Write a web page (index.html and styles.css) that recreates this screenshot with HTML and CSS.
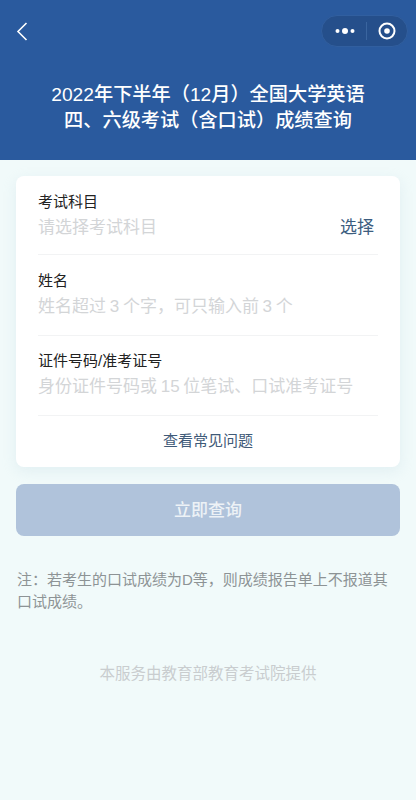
FILE: index.html
```html
<!DOCTYPE html>
<html lang="zh-CN">
<head>
  <meta charset="UTF-8" />
  <meta name="viewport" content="width=device-width, initial-scale=1.0" />
  <title>成绩查询</title>
  <link rel="stylesheet" href="styles.css">
</head>
<body>
  <header class="page-header">
    <div class="nav-bar">
      <svg class="back-icon" width="12" height="20" viewBox="0 0 12 20">
        <path d="M10.5 2 L2 10.5 L10.5 19" fill="none" stroke="#fff" stroke-width="1.6" />
      </svg>
      <div class="capsule">
        <svg width="20" height="8" viewBox="0 0 20 8">
          <circle cx="2.5" cy="4" r="2" fill="#fff" />
          <circle cx="10" cy="4" r="3" fill="#fff" />
          <circle cx="17.5" cy="4" r="2" fill="#fff" />
        </svg>
        <span class="capsule-line"></span>
        <svg width="18" height="18" viewBox="0 0 18 18">
          <circle cx="9" cy="9" r="7.5" fill="none" stroke="#fff" stroke-width="2" />
          <circle cx="9" cy="9" r="2.8" fill="#fff" />
        </svg>
      </div>
    </div>
    <h1 class="page-title">2022年下半年（12月）全国大学英语<br>四、六级考试（含口试）成绩查询</h1>
  </header>
  <main>
    <div class="card">
      <div class="field">
        <div class="field-label">考试科目</div>
        <div class="field-row">
          <span class="placeholder">请选择考试科目</span>
          <span class="pick">选择</span>
        </div>
      </div>
      <div class="field">
        <div class="field-label">姓名</div>
        <div class="field-row">
          <span class="placeholder">姓名超过 3 个字，可只输入前 3 个</span>
        </div>
      </div>
      <div class="field">
        <div class="field-label">证件号码/准考证号</div>
        <div class="field-row">
          <span class="placeholder">身份证件号码或 15 位笔试、口试准考证号</span>
        </div>
      </div>
      <div class="faq">查看常见问题</div>
    </div>
    <button class="submit">立即查询</button>
    <p class="note">注：若考生的口试成绩为D等，则成绩报告单上不报道其口试成绩。</p>
    <p class="provider">本服务由教育部教育考试院提供</p>
  </main>
</body>
</html>
```
FILE: styles.css
```css
html, body {
  margin: 0;
  padding: 0;
  height: 100%;
  background-color: #f1fafa;
  font-family: "Liberation Sans", "Noto Sans CJK SC", sans-serif;
}

.page-header {
  height: 160px;
  box-sizing: border-box;
  padding-top: 15px;
  background-color: #2a5a9e;
  color: #fff;
}

.nav-bar {
  display: flex;
  align-items: center;
  justify-content: space-between;
  padding: 0 8px 0 16px;
}

.capsule {
  width: 87px;
  height: 32px;
  box-sizing: border-box;
  display: flex;
  align-items: center;
  justify-content: space-between;
  padding: 0 11px 0 13px;
  background-color: #254f8b;
  border: 1px solid #315f9f;
  border-radius: 16px;
}

.capsule-line {
  width: 1px;
  height: 18px;
  background-color: #3a659f;
}

.page-title {
  margin: 35px 0 0;
  font-size: 19.2px;
  font-weight: 500;
  line-height: 26px;
  text-align: center;
}

main {
  padding: 16px;
}

.card {
  height: 291px;
  box-sizing: border-box;
  padding: 0 22px;
  background-color: #fff;
  border-radius: 8px;
  box-shadow: 0 4px 14px rgba(190, 215, 225, 0.3);
}

.field {
  padding: 14px 0;
  border-bottom: 1px solid #f2f3f4;
}

.field:first-child {
  padding-bottom: 12px;
}

.field + .field + .field {
  padding-top: 13px;
}

.field-label {
  font-size: 15px;
  line-height: 24px;
  color: #222;
}

.field-row {
  display: flex;
  justify-content: space-between;
  padding-right: 4px;
  font-size: 17px;
  line-height: 28px;
}

.placeholder {
  color: #d3d5d7;
  word-spacing: -1px;
}

.pick {
  color: #3c5d7f;
}

.faq {
  margin-top: 13px;
  font-size: 15px;
  line-height: 24px;
  text-align: center;
  color: #3f5a78;
}

.submit {
  display: block;
  width: 100%;
  height: 52px;
  margin-top: 17px;
  padding-bottom: 5px;
  border: none;
  border-radius: 8px;
  background-color: #b0c3db;
  color: #edf2f6;
  font-family: inherit;
  font-size: 17px;
  font-weight: 500;
}

.note {
  margin: 33px 0 0;
  padding-left: 1px;
  font-size: 15px;
  line-height: 22px;
  color: #8d9395;
}

.provider {
  margin: 49px 0 0;
  font-size: 15.5px;
  line-height: 24px;
  text-align: center;
  color: #c9cdcf;
}
```
